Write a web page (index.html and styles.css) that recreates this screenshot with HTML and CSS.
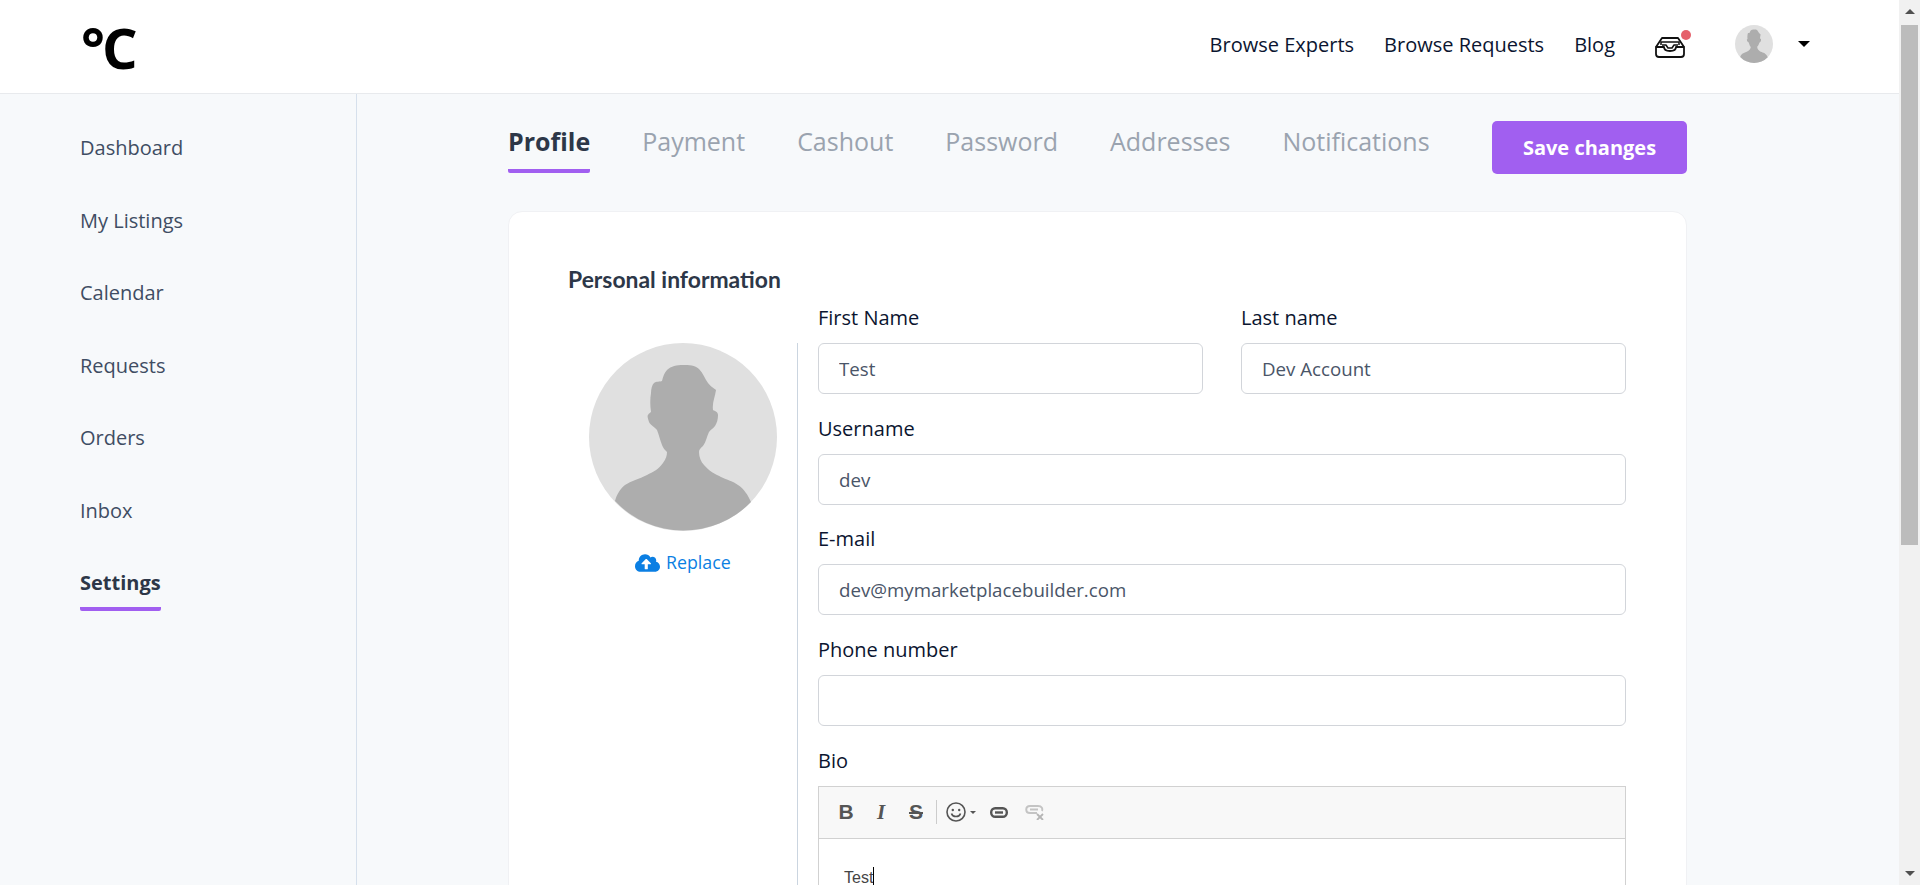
FILE: index.html
```html
<!DOCTYPE html>
<html>
  <head>
    <title>Settings</title>
    <meta charset="utf-8">
    <link rel="stylesheet" href="styles.css">
  </head>
  <body>
    <svg class="defs" width="0" height="0">
      <symbol id="person" viewBox="0 0 188 188">
        <circle cx="94" cy="94" r="94" fill="#e0e0e0"/>
        <path fill="#adadad" d="M94 22C100 22 106 22 110 26C114 30 116 36 119 40C122 44 125 45 127 47C126 54 123 60 124 67C126 68 129 69 129 72C129 76 128 80 126 83C124 86 122 86 120 89C118 93 117 99 114 103C112 105 110 106 110 109C110 114 112 119 115 122C120 128 126 131 132 134C138 137 144 138 149 142C155 146 159 152 162 159A94 94 0 0 1 26 158C28 151 31 146 36 142C42 138 50 136 58 132C64 129 70 126 74 120C77 116 78 112 78 109C76 107 74 105 73 102C71 97 70 92 68 87C66 84 61 82 60 79C59 76 58 73 59 72C60 70 61 70 62 69C61 62 61 56 62 50C62 46 63 42 65 40C67 38 71 39 73 38C74 34 75 30 78 27C82 23 88 22 94 22Z"/>
      </symbol>
    </svg>

    <div class="window">
      <div class="page">
        <!-- (A) TOP BAR -->
        <header class="topbar">
          <a class="logo"><span class="logo-deg">°</span><span class="logo-c">C</span></a>
          <nav class="topnav">
            <a>Browse Experts</a>
            <a>Browse Requests</a>
            <a>Blog</a>
          </nav>
          <div class="inbox">
            <svg width="32" height="22" viewBox="0 0 32 22" fill="none" stroke="#111" stroke-width="1.8" stroke-linejoin="round">
              <path d="M2 11L8 2H24L30 11"/>
              <path d="M2 11H10C10 14 12 15 16 15C20 15 22 14 22 11H30V18C30 20 29 21 27 21H5C3 21 2 20 2 18Z"/>
              <path d="M7 9V6H25V9" stroke-width="1.5"/>
              <path d="M8 9H12L14 12H18L20 9H24" stroke-width="1.5"/>
            </svg>
            <span class="inbox-dot"></span>
          </div>
          <svg class="user-pic" width="38" height="38"><use href="#person"/></svg>
          <span class="caret"></span>
        </header>

        <div class="body-row">
          <!-- (B) SIDEBAR -->
          <aside class="sidebar">
            <a>Dashboard</a>
            <a>My Listings</a>
            <a>Calendar</a>
            <a>Requests</a>
            <a>Orders</a>
            <a>Inbox</a>
            <a class="active">Settings</a>
          </aside>

          <!-- (C) SETTINGS -->
          <main class="content">
            <div class="tabs-row">
              <div class="tabs">
                <a class="active">Profile</a>
                <a>Payment</a>
                <a>Cashout</a>
                <a>Password</a>
                <a>Addresses</a>
                <a>Notifications</a>
              </div>
              <button class="save">Save changes</button>
            </div>

            <section class="card">
              <h2>Personal information</h2>
              <div class="card-row">
                <div class="photo">
                  <svg class="photo-pic" width="188" height="188"><use href="#person"/></svg>
                  <a class="replace">
                    <svg width="25" height="20" viewBox="0 0 640 512"><path fill="#0b7fe3" d="M537.6 226.6c4.1-10.7 6.4-22.4 6.4-34.6 0-53-43-96-96-96-19.7 0-38.1 6-53.3 16.2C367 64.2 315.3 32 256 32c-88.4 0-160 71.6-160 160 0 2.7.1 5.4.2 8.1C40.2 219.8 0 273.2 0 336c0 79.5 64.5 144 144 144h368c70.7 0 128-57.3 128-128 0-61.9-44-113.6-102.4-125.4zM393.4 288H328v112c0 8.8-7.2 16-16 16h-48c-8.8 0-16-7.2-16-16V288h-65.4c-14.3 0-21.4-17.2-11.3-27.3l105.4-105.4c6.2-6.2 16.4-6.2 22.6 0l105.4 105.4c10.1 10.1 2.9 27.3-11.3 27.3z"/></svg>
                    Replace
                  </a>
                </div>
                <form class="fields">
                  <div class="two">
                    <div class="field">
                      <label>First Name</label>
                      <input type="text" value="Test">
                    </div>
                    <div class="field">
                      <label>Last name</label>
                      <input type="text" value="Dev Account">
                    </div>
                  </div>
                  <div class="field">
                    <label>Username</label>
                    <input type="text" value="dev">
                  </div>
                  <div class="field">
                    <label>E-mail</label>
                    <input type="text" value="dev@mymarketplacebuilder.com">
                  </div>
                  <div class="field">
                    <label>Phone number</label>
                    <input type="text">
                  </div>
                  <div class="field">
                    <label>Bio</label>
                    <div class="editor">
                      <div class="toolbar">
                        <span class="tool tool-b">B</span>
                        <span class="tool tool-i">I</span>
                        <span class="tool tool-s">S</span>
                        <span class="tool-sep"></span>
                        <svg class="tool-smile" width="22" height="22" viewBox="0 0 22 22" fill="none" stroke="#555" stroke-width="1.6">
                          <circle cx="10" cy="11" r="9"/>
                          <circle cx="6.8" cy="9" r="1.2" fill="#555" stroke="none"/>
                          <circle cx="13.2" cy="9" r="1.2" fill="#555" stroke="none"/>
                          <path d="M5.5 12.5C6.5 16.5 13.5 16.5 14.5 12.5"/>
                        </svg>
                        <span class="tool-arrow"></span>
                        <svg class="tool-link" width="18" height="11" viewBox="0 0 18 11" fill="none" stroke="#555" stroke-width="2.4">
                          <rect x="1.200" y="1.200" width="15.600" height="8.600" rx="4"/>
                          <path d="M5 5.500H13"/>
                        </svg>
                        <svg class="tool-unlink" width="19" height="15" viewBox="0 0 19 15" fill="none" stroke="#c4c4c4" stroke-width="2">
                          <path d="M12 8H5C0 8 0 1 5 1H13C17 1 18 4 17 6"/>
                          <path d="M5 4.500H13"/>
                          <path d="M12 9L18 15M18 9L12 15" stroke="#b5b5b5" stroke-width="1.800"/>
                        </svg>
                      </div>
                      <div class="editor-text">Test<span class="text-cursor"></span></div>
                    </div>
                  </div>
                </form>
              </div>
            </section>
          </main>
        </div>
      </div>

      <!-- (D) SCROLLBAR -->
      <div class="scrollbar">
        <span class="sb-up"></span>
        <span class="sb-thumb"></span>
        <span class="sb-down"></span>
      </div>
    </div>
  </body>
</html>
```

FILE: styles.css
```css
* {
  font-family: "Open Sans", sans-serif;
  box-sizing: border-box;
}
html, body {
  margin: 0;
  height: 100%;
  overflow: hidden;
}
.defs { display: block; height: 0; }
.window {
  display: flex;
  height: 885px;
  overflow: hidden;
}
.page {
  width: 1899px;
  background: #f7f9fb;
}

/* (A) TOP BAR */
.topbar {
  display: flex;
  align-items: center;
  height: 94px;
  padding: 0 89px 0 81px;
  background: #fff;
  border-bottom: 1px solid #e8eaed;
}
.logo {
  display: flex;
  margin: 1px auto 0 0;
  color: #000;
  line-height: 58px;
  font-size: 56px;
  letter-spacing: -3px;
}
.logo span { font-weight: 700; }
.topnav {
  display: flex;
  gap: 30px;
  margin-top: -5px;
  color: #0b1530;
  font-size: 20px;
}
.inbox {
  position: relative;
  margin: 0 0 0 39px;
  height: 22px;
}
.inbox svg { display: block; }
.inbox-dot {
  position: absolute;
  top: -6px;
  right: -5px;
  width: 10px;
  height: 10px;
  border-radius: 50%;
  background: #e5606a;
}
.user-pic { margin-left: 49px; margin-top: -6px; }
.caret {
  margin: -6px 0 0 25px;
  border-left: 6px solid transparent;
  border-right: 6px solid transparent;
  border-top: 6px solid #000;
}

.body-row {
  display: flex;
  height: 791px;
}

/* (B) SIDEBAR */
.sidebar {
  flex: 0 0 357px;
  padding: 40px 0 0 80px;
  border-right: 1px solid #d6e0ec;
  display: flex;
  flex-direction: column;
  align-items: flex-start;
  gap: 45.5px;
}
.sidebar a {
  color: #3f4d63;
  font-size: 20px;
  line-height: 27px;
}
.sidebar a.active {
  color: #2d3748;
  font-weight: 700;
  padding-bottom: 11px;
  border-bottom: 4px solid #a15ff0;
  border-radius: 0 0 2px 2px;
}

/* (C) SETTINGS */
.content {
  width: 1179px;
  margin-left: 151px;
}
.tabs-row {
  display: flex;
  justify-content: space-between;
  align-items: flex-start;
  height: 117px;
}
.tabs {
  display: flex;
  gap: 52px;
  align-items: flex-start;
  padding-top: 30px;
}
.tabs a {
  color: #9aa3af;
  font-size: 25px;
  line-height: 34px;
  height: 49px;
}
.tabs a.active {
  color: #2d3748;
  font-weight: 700;
  border-bottom: 4px solid #a15ff0;
  border-radius: 2px;
}
.save {
  width: 195px;
  height: 53px;
  margin-top: 27px;
  border: 0;
  border-radius: 5px;
  color: #fff;
  background: #a15ff0;
  font-size: 20px;
  font-weight: 700;
}
.card {
  height: 700px;
  padding: 52px 61px 0 59px;
  background: #fff;
  border: 1px solid #f0f1f4;
  border-radius: 14px;
}
.card h2 {
  margin: 0;
  color: #2d3748;
  font-family: Lato, sans-serif;
  font-size: 22.9px;
  font-weight: 700;
  line-height: 30px;
}
.card-row {
  display: flex;
  margin-top: 11px;
}
.photo {
  flex: 0 0 230px;
  margin-top: 38px;
  height: 560px;
  padding-left: 21px;
  border-right: 1px solid #cbd5e0;
}
.photo-pic { display: block; }
.replace {
  display: flex;
  align-items: center;
  gap: 6px;
  margin: 20px 0 0 46px;
  color: #0b7fe3;
  font-size: 17.8px;
  line-height: 23px;
}
.fields {
  flex: 0 0 808px;
  margin-left: 20px;
}
.two {
  display: flex;
  gap: 38px;
}
.two .field { flex: 1; }
.field { margin-bottom: 21.7px; }
.field label {
  display: block;
  margin-bottom: 12px;
  color: #0b1530;
  font-size: 20px;
  line-height: 26px;
}
.field input {
  display: block;
  width: 100%;
  height: 51px;
  padding: 0 20px;
  color: #4a5568;
  font-size: 18.7px;
  border: 1px solid #d2d5da;
  border-radius: 6px;
  background: #fff;
}
.editor {
  border: 1px solid #d1d1d1;
}
.toolbar {
  display: flex;
  align-items: center;
  height: 52px;
  padding-left: 19px;
  background: #f8f8f8;
  border-bottom: 1px solid #d1d1d1;
}
.tool {
  width: 16px;
  margin-right: 19px;
  color: #555;
  font-size: 21px;
  text-align: center;
}
.tool-b { font-family: "Liberation Sans", sans-serif; font-weight: 700; }
.tool-i { font-family: "Liberation Serif", serif; font-weight: 700; font-style: italic; }
.tool-s { font-family: "Liberation Sans", sans-serif; font-weight: 700; text-decoration: line-through; margin-right: 12px; }
.tool-sep {
  width: 1px;
  height: 24px;
  background: #ccc;
  margin-right: 9px;
}
.tool-arrow {
  margin: 0 14px 0 2px;
  border-left: 3px solid transparent;
  border-right: 3px solid transparent;
  border-top: 3px solid #555;
}
.tool-link { margin-right: 17px; }
.editor-text {
  height: 100px;
  padding: 28px 0 0 25px;
  color: #444;
  font-family: "Liberation Sans", sans-serif;
  font-size: 16px;
  line-height: 22px;
}
.text-cursor {
  display: inline-block;
  width: 1px;
  height: 20px;
  background: #000;
  vertical-align: -4px;
}

/* (D) SCROLLBAR */
.scrollbar {
  flex: 0 0 21px;
  position: relative;
  background: #f1f1f1;
}
.sb-thumb {
  position: absolute;
  top: 25px;
  left: 2px;
  width: 17px;
  height: 520px;
  background: #bcbcbc;
}
.sb-up, .sb-down {
  position: absolute;
  left: 6px;
  border-left: 5px solid transparent;
  border-right: 5px solid transparent;
}
.sb-up { top: 9px; border-bottom: 5px solid #505050; }
.sb-down { bottom: 9px; border-top: 5px solid #505050; }
```
